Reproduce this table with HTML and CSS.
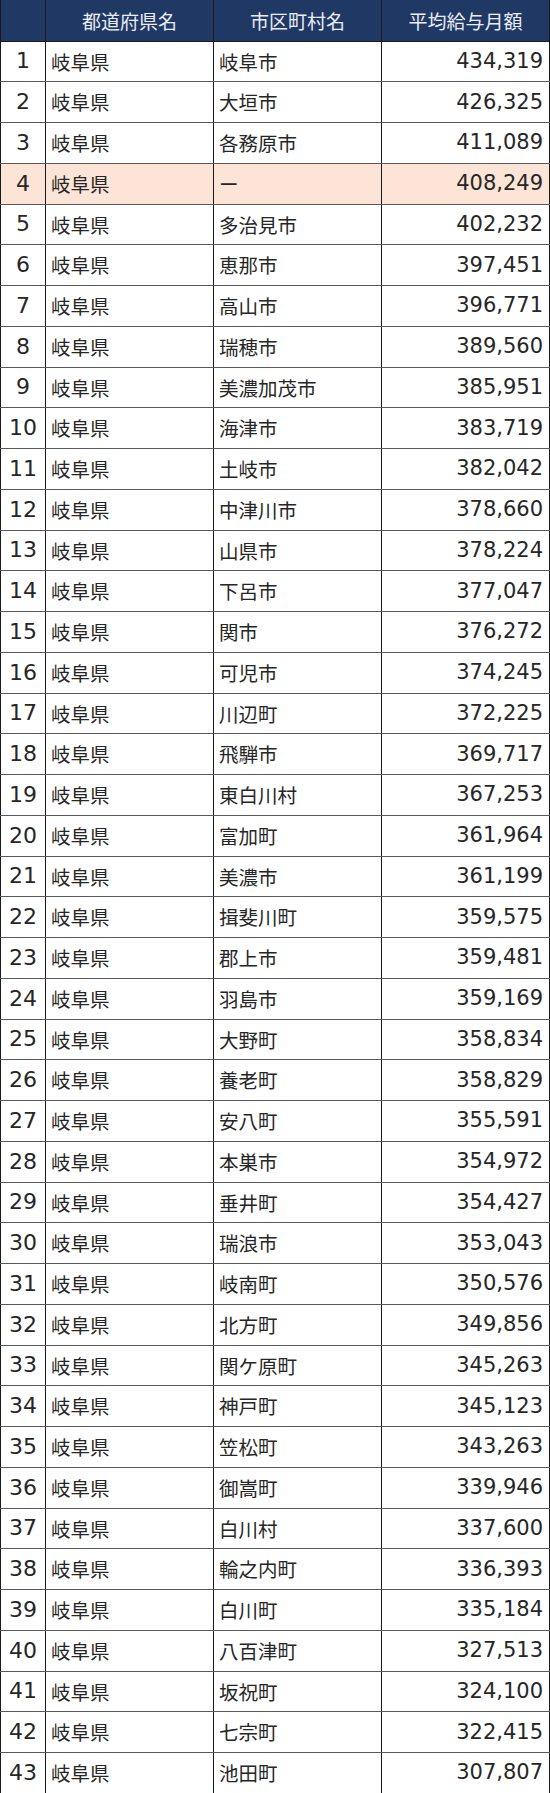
FILE: index.html
```html
<!DOCTYPE html>
<html lang="ja">
<head>
<meta charset="utf-8">
<link rel="stylesheet" href="styles.css">
</head>
<body>
<table class="salary">
<thead>
<tr><th class="no"></th><th>都道府県名</th><th>市区町村名</th><th>平均給与月額</th></tr>
</thead>
<tbody>
<tr><td class="no">1</td><td>岐阜県</td><td>岐阜市</td><td class="num">434,319</td></tr>
<tr><td class="no">2</td><td>岐阜県</td><td>大垣市</td><td class="num">426,325</td></tr>
<tr><td class="no">3</td><td>岐阜県</td><td>各務原市</td><td class="num">411,089</td></tr>
<tr class="hl"><td class="no">4</td><td>岐阜県</td><td>ー</td><td class="num">408,249</td></tr>
<tr><td class="no">5</td><td>岐阜県</td><td>多治見市</td><td class="num">402,232</td></tr>
<tr><td class="no">6</td><td>岐阜県</td><td>恵那市</td><td class="num">397,451</td></tr>
<tr><td class="no">7</td><td>岐阜県</td><td>高山市</td><td class="num">396,771</td></tr>
<tr><td class="no">8</td><td>岐阜県</td><td>瑞穂市</td><td class="num">389,560</td></tr>
<tr><td class="no">9</td><td>岐阜県</td><td>美濃加茂市</td><td class="num">385,951</td></tr>
<tr><td class="no">10</td><td>岐阜県</td><td>海津市</td><td class="num">383,719</td></tr>
<tr><td class="no">11</td><td>岐阜県</td><td>土岐市</td><td class="num">382,042</td></tr>
<tr><td class="no">12</td><td>岐阜県</td><td>中津川市</td><td class="num">378,660</td></tr>
<tr><td class="no">13</td><td>岐阜県</td><td>山県市</td><td class="num">378,224</td></tr>
<tr><td class="no">14</td><td>岐阜県</td><td>下呂市</td><td class="num">377,047</td></tr>
<tr><td class="no">15</td><td>岐阜県</td><td>関市</td><td class="num">376,272</td></tr>
<tr><td class="no">16</td><td>岐阜県</td><td>可児市</td><td class="num">374,245</td></tr>
<tr><td class="no">17</td><td>岐阜県</td><td>川辺町</td><td class="num">372,225</td></tr>
<tr><td class="no">18</td><td>岐阜県</td><td>飛騨市</td><td class="num">369,717</td></tr>
<tr><td class="no">19</td><td>岐阜県</td><td>東白川村</td><td class="num">367,253</td></tr>
<tr><td class="no">20</td><td>岐阜県</td><td>富加町</td><td class="num">361,964</td></tr>
<tr><td class="no">21</td><td>岐阜県</td><td>美濃市</td><td class="num">361,199</td></tr>
<tr><td class="no">22</td><td>岐阜県</td><td>揖斐川町</td><td class="num">359,575</td></tr>
<tr><td class="no">23</td><td>岐阜県</td><td>郡上市</td><td class="num">359,481</td></tr>
<tr><td class="no">24</td><td>岐阜県</td><td>羽島市</td><td class="num">359,169</td></tr>
<tr><td class="no">25</td><td>岐阜県</td><td>大野町</td><td class="num">358,834</td></tr>
<tr><td class="no">26</td><td>岐阜県</td><td>養老町</td><td class="num">358,829</td></tr>
<tr><td class="no">27</td><td>岐阜県</td><td>安八町</td><td class="num">355,591</td></tr>
<tr><td class="no">28</td><td>岐阜県</td><td>本巣市</td><td class="num">354,972</td></tr>
<tr><td class="no">29</td><td>岐阜県</td><td>垂井町</td><td class="num">354,427</td></tr>
<tr><td class="no">30</td><td>岐阜県</td><td>瑞浪市</td><td class="num">353,043</td></tr>
<tr><td class="no">31</td><td>岐阜県</td><td>岐南町</td><td class="num">350,576</td></tr>
<tr><td class="no">32</td><td>岐阜県</td><td>北方町</td><td class="num">349,856</td></tr>
<tr><td class="no">33</td><td>岐阜県</td><td>関ケ原町</td><td class="num">345,263</td></tr>
<tr><td class="no">34</td><td>岐阜県</td><td>神戸町</td><td class="num">345,123</td></tr>
<tr><td class="no">35</td><td>岐阜県</td><td>笠松町</td><td class="num">343,263</td></tr>
<tr><td class="no">36</td><td>岐阜県</td><td>御嵩町</td><td class="num">339,946</td></tr>
<tr><td class="no">37</td><td>岐阜県</td><td>白川村</td><td class="num">337,600</td></tr>
<tr><td class="no">38</td><td>岐阜県</td><td>輪之内町</td><td class="num">336,393</td></tr>
<tr><td class="no">39</td><td>岐阜県</td><td>白川町</td><td class="num">335,184</td></tr>
<tr><td class="no">40</td><td>岐阜県</td><td>八百津町</td><td class="num">327,513</td></tr>
<tr><td class="no">41</td><td>岐阜県</td><td>坂祝町</td><td class="num">324,100</td></tr>
<tr><td class="no">42</td><td>岐阜県</td><td>七宗町</td><td class="num">322,415</td></tr>
<tr><td class="no">43</td><td>岐阜県</td><td>池田町</td><td class="num">307,807</td></tr>
</tbody>
</table>
</body>
</html>
```
FILE: styles.css
```css
html, body {
  margin: 0;
  padding: 0;
  background: #ffffff;
}
.salary {
  border-collapse: collapse;
  table-layout: fixed;
  width: 550px;
  font-family: "DejaVu Sans", "Noto Sans CJK JP", sans-serif;
  font-size: 19.5px;
  color: #262626;
}
.salary th, .salary td {
  box-sizing: border-box;
}
.salary th {
  height: 41px;
  background: #203864;
  color: #e9edf5;
  font-family: "Noto Sans CJK JP", sans-serif;
  font-weight: normal;
  font-size: 19px;
  text-align: center;
  padding: 0;
  border-left: 1.5px solid #1a1a1a;
  border-right: 1.5px solid #1a1a1a;
  border-bottom: 1.5px solid #1a1a1a;
}
.salary th.no { width: 45px; }
.salary th:nth-child(2) { width: 168px; }
.salary th:nth-child(3) { width: 168px; }
.salary td {
  height: 40.75px;
  padding: 0 5px;
  line-height: 1;
  white-space: nowrap;
  border-left: 1.5px solid #1a1a1a;
  border-right: 1.5px solid #1a1a1a;
  border-bottom: 1.5px solid #5a5a5a;
  font-family: "Noto Sans CJK JP", sans-serif;
}
.salary td.no {
  text-align: center;
  padding: 0;
  font-family: "DejaVu Sans", sans-serif;
  font-size: 22px;
}
.salary td.num {
  text-align: right;
  padding-right: 6px;
  font-family: "DejaVu Sans", sans-serif;
  font-size: 21px;
}
.salary tbody tr:last-child td {
  border-bottom-color: #1a1a1a;
}
.salary tr.hl td {
  background: #fce4d6;
}
```
